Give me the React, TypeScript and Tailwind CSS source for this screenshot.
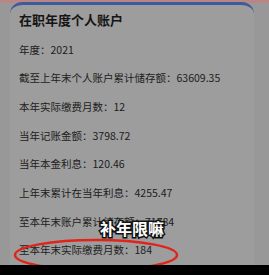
import React from "react";

const rows = [
  "年度：2021",
  "截至上年末个人账户累计储存额：63609.35",
  "本年实际缴费月数：12",
  "当年记账金额：3798.72",
  "当年本金利息：120.46",
  "上年末累计在当年利息：4255.47",
  "至本年末账户累计储存额：71784",
  "至本年末实际缴费月数：184",
];

export default function App() {
  return (
    <div
      className="relative w-[269px] h-[275px] overflow-hidden bg-[#989898] flex flex-col"
      style={{ fontFamily: '"Noto Sans CJK SC", "Noto Sans", sans-serif' }}
    >
      <div className="h-[3px] bg-[#b98585] shrink-0" />
      <div className="flex-1 mx-[10px] mr-[15px] -mt-[1px] rounded-t-[12px] border-t-[3px] border-[#3b5b9a] bg-[#9d9d9d] flex flex-col px-[9px] text-[#1c1c1c] overflow-hidden">
        <div className="pt-[4px] h-[34px] text-[13px] font-bold leading-[22px] text-[#151515]">
          在职年度个人账户
        </div>
        <div className="flex flex-col">
          {rows.map((r) => (
            <div key={r} className="h-[28.7px] leading-[28.7px] text-[10.5px] whitespace-nowrap">
              {r}
            </div>
          ))}
        </div>
      </div>
      <div className="h-[10px] bg-black shrink-0" />
      <div
        className="absolute left-[100px] top-[217px] text-[16px] font-bold text-white leading-[22px]"
        style={{ WebkitTextStroke: "3px #111", paintOrder: "stroke fill" }}
      >
        补年限嘛
      </div>
      <svg className="absolute left-0 top-0" width="269" height="275" viewBox="0 0 269 275">
        <ellipse cx="96" cy="255" rx="81" ry="15" fill="none" stroke="#e0241c" strokeWidth="2.5" />
      </svg>
      <div className="absolute left-0 bottom-0 w-full h-[10px] bg-black" />
    </div>
  );
}
